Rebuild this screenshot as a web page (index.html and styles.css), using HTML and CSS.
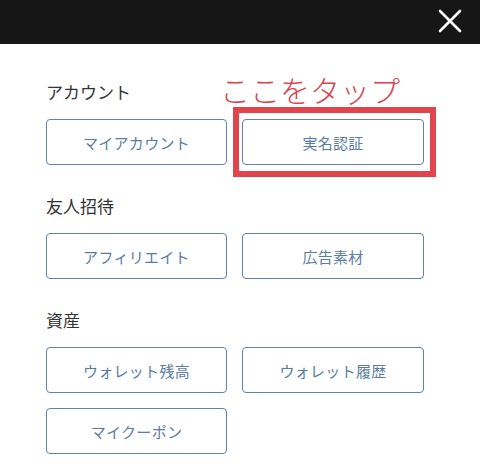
FILE: index.html
```html
<!DOCTYPE html>
<html lang="ja">
<head>
<meta charset="utf-8">
<link rel="stylesheet" href="styles.css">
</head>
<body>
<header class="topbar">
  <button class="close" aria-label="閉じる">
    <svg width="24" height="24" viewBox="0 0 24 24"><path d="M2 2 L22 22 M22 2 L2 22" stroke="#fff" stroke-width="2.6" stroke-linecap="round" fill="none"/></svg>
  </button>
</header>
<main class="menu">
  <section class="group">
    <h2 class="label">アカウント</h2>
    <div class="grid">
      <a class="btn">マイアカウント</a>
      <div class="cell">
        <a class="btn">実名認証</a>
        <div class="hint">ここをタップ</div>
        <div class="highlight"></div>
      </div>
    </div>
  </section>
  <section class="group">
    <h2 class="label">友人招待</h2>
    <div class="grid">
      <a class="btn">アフィリエイト</a>
      <a class="btn">広告素材</a>
    </div>
  </section>
  <section class="group">
    <h2 class="label">資産</h2>
    <div class="grid">
      <a class="btn">ウォレット残高</a>
      <a class="btn">ウォレット履歴</a>
      <a class="btn">マイクーポン</a>
    </div>
  </section>
</main>
</body>
</html>
```
FILE: styles.css
```css
* { box-sizing: border-box; }
html, body { margin: 0; padding: 0; background: #fff; }
body {
  font-family: "Noto Sans CJK JP", "Noto Sans", sans-serif;
  width: 480px;
  height: 471px;
  overflow: hidden;
}
.topbar {
  height: 44px;
  background: #161616;
  display: flex;
  justify-content: flex-end;
  align-items: flex-start;
  padding: 9px 18px 0 0;
}
.close {
  border: 0;
  background: none;
  padding: 0;
  width: 24px;
  height: 24px;
  display: block;
}
.close svg { display: block; }
.menu {
  padding: 36px 0 0 46px;
}
.group + .group { margin-top: 29px; }
.label {
  margin: 0 0 15px;
  font-size: 17px;
  font-weight: 400;
  line-height: 24px;
  color: #333;
}
.grid {
  display: grid;
  grid-template-columns: 181px 182px;
  column-gap: 15px;
  row-gap: 15px;
}
.btn {
  display: flex;
  align-items: center;
  justify-content: center;
  height: 46px;
  border: 1.5px solid #5f82a8;
  border-radius: 4px;
  color: #5a7ca3;
  font-size: 15px;
  letter-spacing: 0.3px;
  text-decoration: none;
}
.cell { position: relative; }
.highlight {
  position: absolute;
  left: -9px;
  top: -12px;
  width: 203px;
  height: 70px;
  border: 6px solid #e2444b;
}
.hint {
  position: absolute;
  left: -22px;
  top: -45px;
  font-size: 30px;
  font-weight: 300;
  line-height: 30px;
  color: #d9434b;
  white-space: nowrap;
}
```
